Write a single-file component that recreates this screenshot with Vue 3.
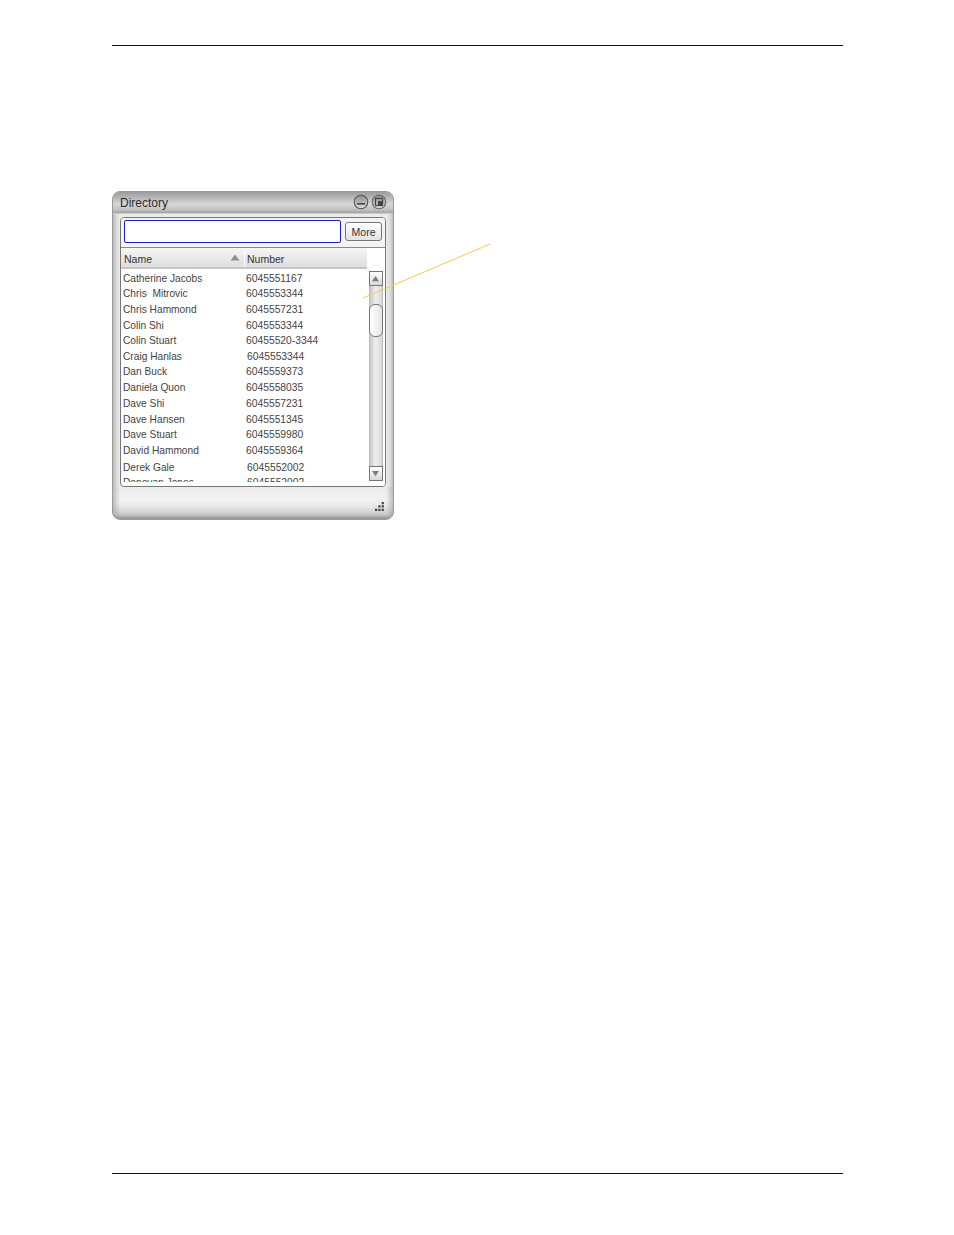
<script setup>
const rows = [
  { name: 'Catherine Jacobs', num: '6045551167', h: 15, o: 0 },
  { name: 'Chris  Mitrovic', num: '6045553344', h: 16, o: 0 },
  { name: 'Chris Hammond', num: '6045557231', h: 16, o: 0 },
  { name: 'Colin Shi', num: '6045553344', h: 15, o: 0 },
  { name: 'Colin Stuart', num: '60455520-3344', h: 16, o: 0 },
  { name: 'Craig Hanlas', num: '6045553344', h: 15, o: 1 },
  { name: 'Dan Buck', num: '6045559373', h: 16, o: 0 },
  { name: 'Daniela Quon', num: '6045558035', h: 16, o: 0 },
  { name: 'Dave Shi', num: '6045557231', h: 16, o: 0 },
  { name: 'Dave Hansen', num: '6045551345', h: 15, o: 0 },
  { name: 'Dave Stuart', num: '6045559980', h: 16, o: 0 },
  { name: 'David Hammond', num: '6045559364', h: 17, o: 0 },
  { name: 'Derek Gale', num: '6045552002', h: 15, o: 1 },
  { name: 'Donovan Jones', num: '6045552002', h: 15, o: 1 },
]
</script>

<template>
  <div class="page">
    <div class="rule"></div>
    <section class="window">
      <header class="titlebar">
        <span class="title">Directory</span>
        <div class="controls">
          <svg class="ctl" viewBox="0 0 16 16" aria-hidden="true">
            <defs>
              <linearGradient id="orb" x1="0" y1="0" x2="0" y2="1">
                <stop offset="0" stop-color="#8e8e8e" />
                <stop offset="0.5" stop-color="#b4b4b4" />
                <stop offset="1" stop-color="#e2e2e2" />
              </linearGradient>
            </defs>
            <circle cx="8" cy="8" r="6.8" fill="url(#orb)" stroke="#555" stroke-width="1.1" />
            <rect x="4" y="9" width="8" height="1.6" fill="#444" />
          </svg>
          <svg class="ctl" viewBox="0 0 16 16" aria-hidden="true">
            <circle cx="8" cy="8" r="6.8" fill="url(#orb)" stroke="#666" stroke-width="1.1" />
            <rect x="4.5" y="4.5" width="7" height="7" fill="none" stroke="#444" stroke-width="1.2" />
            <rect x="7" y="7" width="4.5" height="4.5" fill="#444" />
          </svg>
        </div>
      </header>
      <div class="panel">
        <div class="search">
          <div class="input"></div>
          <button class="more">More</button>
        </div>
        <div class="content">
          <div class="tablecol">
            <div class="thead">
              <div class="th th-name">
                <span>Name</span>
                <svg class="sort" viewBox="0 0 10 7" aria-hidden="true"><path d="M5 .5 9.5 6.5H.5Z" fill="#8f8f8f" /></svg>
              </div>
              <div class="th th-num">Number</div>
            </div>
            <div class="list">
              <div v-for="r in rows" :key="r.name" class="row" :style="{ height: r.h + 'px' }">
                <span class="c-name">{{ r.name }}</span>
                <span class="c-num" :style="{ marginLeft: r.o + 'px' }">{{ r.num }}</span>
              </div>
            </div>
          </div>
          <div class="scrollbar">
            <div class="arrow up"><svg viewBox="0 0 10 8" aria-hidden="true"><path d="M5 1 9 7H1Z" fill="#7d7d7d" /></svg></div>
            <div class="track"><div class="thumb"></div></div>
            <div class="arrow down"><svg viewBox="0 0 10 8" aria-hidden="true"><path d="M5 7 9 1H1Z" fill="#7d7d7d" /></svg></div>
          </div>
        </div>
      </div>
      <footer class="statusbar">
        <svg class="grip" viewBox="0 0 9 9" aria-hidden="true">
          <path d="M6 0h2v2H6zM3 3h2v2H3zM6 3h2v2H6zM0 6h2v2H0zM3 6h2v2H3zM6 6h2v2H6z" fill="#444" />
        </svg>
      </footer>
      <svg class="callout" viewBox="0 0 130 56" aria-hidden="true">
        <line x1="1" y1="55" x2="128" y2="1" stroke="#f6c94e" stroke-width="1" />
      </svg>
    </section>
    <div class="rule bottom"></div>
  </div>
</template>

<style>
html, body { margin: 0; background: #fff; }
</style>

<style scoped>
.page {
  width: 954px;
  height: 1235px;
  box-sizing: border-box;
  padding: 45px 111px 0 112px;
  display: flex;
  flex-direction: column;
  align-items: flex-start;
  background: #fff;
  font-family: "Liberation Sans", Arial, sans-serif;
}
.rule { width: 731px; height: 1px; background: #111; flex: none; }
.rule.bottom { margin-top: 653px; }
.window {
  position: relative;
  margin-top: 145px;
  width: 282px;
  height: 329px;
  box-sizing: border-box;
  display: flex;
  flex-direction: column;
  border: 1px solid #9a9a9a;
  border-radius: 8px;
  background: linear-gradient(90deg, #bcbcbc 0, #dedede 4px, #ebebeb 7px, #ebebeb calc(100% - 7px), #dedede calc(100% - 3px), #bcbcbc 100%);
  flex: none;
}
.titlebar {
  height: 22px;
  flex: none;
  box-sizing: border-box;
  display: flex;
  align-items: center;
  justify-content: space-between;
  padding: 0 6px 2px 7px;
  border-radius: 7px 7px 0 0;
  background: linear-gradient(180deg, #9c9c9c 0, #b0b0b0 20%, #d8d8d8 55%, #c2c2c2 80%, #a4a4a4 95%, #eeeeee 100%);
}
.title { font-size: 12px; line-height: 14px; padding-top: 1px; color: #2c2c2c; }
.controls { display: flex; gap: 2px; }
.ctl { width: 16px; height: 16px; display: block; }
.panel {
  margin: 3px 7px 0 7px;
  height: 270px;
  flex: none;
  box-sizing: border-box;
  border: 1px solid #777;
  border-radius: 4px;
  background: #fff;
  display: flex;
  flex-direction: column;
  overflow: hidden;
}
.search {
  height: 30px;
  flex: none;
  box-sizing: border-box;
  display: flex;
  align-items: flex-start;
  gap: 4px;
  padding: 2px 3px 0 3px;
  background: #f4f4f4;
  border-bottom: 1px solid #8a8a8a;
}
.input {
  width: 218px;
  height: 23px;
  box-sizing: border-box;
  border: 1px solid #1c1cc8;
  border-radius: 2px;
  background: #fff;
}
.more {
  width: 37px;
  height: 19px;
  margin-top: 2px;
  padding: 0;
  box-sizing: border-box;
  border: 1px solid #777;
  border-radius: 3px;
  background: linear-gradient(180deg, #fff, #e2e2e2);
  font-family: inherit;
  font-size: 10.5px;
  color: #333;
}
.content { display: flex; flex: 1; min-height: 0; }
.tablecol { flex: 1; min-width: 0; display: flex; flex-direction: column; }
.thead {
  height: 21px;
  flex: none;
  box-sizing: border-box;
  display: flex;
  padding-top: 2px;
  background: linear-gradient(180deg, #f6f6f6, #dedede);
  border-bottom: 2px solid #c6c6c6;
  width: 247px;
}
.th {
  box-sizing: border-box;
  font-size: 10.5px;
  color: #333;
  display: flex;
  align-items: center;
  justify-content: space-between;
}
.th-name { width: 124px; padding: 0 4px 0 3px; border-right: 1px solid #fff; }
.th-num { flex: 1; padding-left: 2px; }
.sort { width: 10px; height: 7px; margin-bottom: 2px; }
.list { height: 213px; flex: none; overflow: hidden; padding-top: 4px; box-sizing: border-box; }
.row {
  display: flex;
  align-items: flex-start;
  font-size: 10.2px;
  line-height: 12px;
  color: #444;
  white-space: pre;
}
.c-name { width: 125px; padding-left: 2px; box-sizing: border-box; flex: none; }
.c-num { font-size: 10.3px; }
.scrollbar {
  width: 18px;
  flex: none;
  box-sizing: border-box;
  padding: 23px 2px 5px 1px;
  display: flex;
  flex-direction: column;
  align-items: center;
  background: #fff;
}
.arrow {
  width: 14px;
  height: 15px;
  flex: none;
  box-sizing: border-box;
  border: 1px solid #777;
  background: linear-gradient(180deg, #fff, #d8d8d8);
  display: flex;
  align-items: center;
  justify-content: center;
}
.arrow svg { width: 9px; height: 7px; }
.track {
  flex: 1;
  width: 14px;
  box-sizing: border-box;
  background: linear-gradient(90deg, #c8c8c8, #eeeeee 45%, #d8d8d8);
  padding-top: 18px;
  border-left: 1px solid #bbb;
  border-right: 1px solid #bbb;
}
.thumb {
  width: 14px;
  margin-left: -1px;
  height: 33px;
  box-sizing: border-box;
  border: 1px solid #777;
  border-radius: 6px;
  background: linear-gradient(90deg, #fff, #e4e4e4);
}
.statusbar {
  flex: 1;
  position: relative;
  border-radius: 0 0 7px 7px;
  background:
    linear-gradient(90deg, rgba(150, 150, 150, .55) 0, rgba(150, 150, 150, 0) 7px, rgba(150, 150, 150, 0) calc(100% - 7px), rgba(150, 150, 150, .55) 100%),
    linear-gradient(180deg, #ebebeb 0, #f2f2f2 40%, #e8e8e8 60%, #cacaca 85%, #909090 100%);
}
.grip { position: absolute; right: 8px; bottom: 7px; width: 10px; height: 10px; }
.callout { position: absolute; left: 249px; top: 51px; width: 130px; height: 56px; overflow: visible; }
</style>
